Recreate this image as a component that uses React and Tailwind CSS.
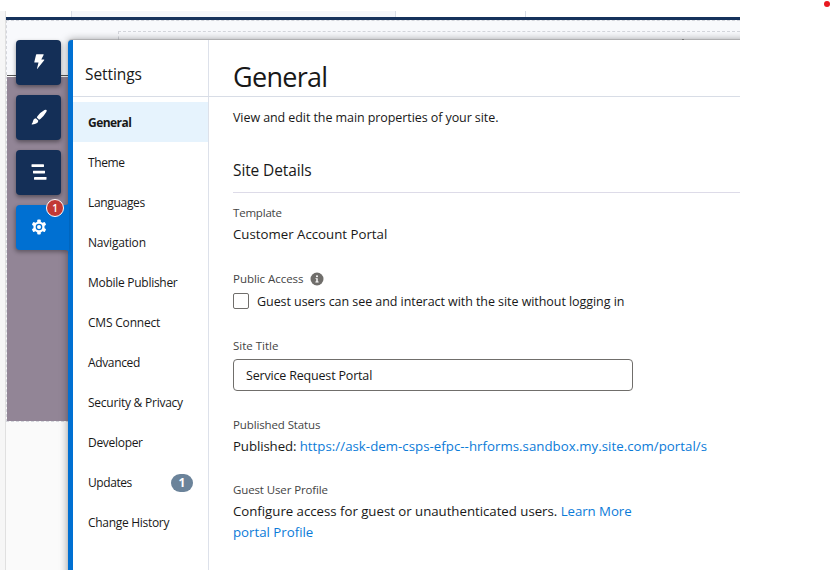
const NAV = [
  ["Theme", "tracking-[-0.4px]"],
  ["Languages", "tracking-[-0.32px]"],
  ["Navigation", "tracking-[-0.2px]"],
  ["Mobile Publisher", "tracking-[-0.28px]"],
  ["CMS Connect", "tracking-[-0.2px]"],
  ["Advanced", "tracking-[-0.35px]"],
  ["Security & Privacy", "tracking-[-0.24px]"],
  ["Developer", "tracking-[-0.3px]"],
  ["Updates", "tracking-[-0.42px]"],
  ["Change History", "tracking-[-0.3px]"],
];

function Bolt() {
  return (
    <svg width="45" height="45" viewBox="0 0 45 45" fill="#fff">
      <path d="M20.6 14.3h6.7q.6 0 .3.6l-2.3 4.6h2.6q.7.1.3.7l-6.8 8.6q-.5.4-.4-.2l1.5-6h-3.7q-.6 0-.5-.6l1.7-7.1q.1-.6.6-.6z" />
    </svg>
  );
}

function Brush() {
  return (
    <svg width="45" height="45" viewBox="0 0 45 45" fill="#fff">
      <path d="M30.5 14.9q.6.6-.2 2-2.6 4.300-5.900 7.100l-1.300.7-2.300-2.300.6-1.200q2.900-3.700 7.100-6.100 1.400-.8 2-.2z" />
      <path d="M19.900 23.300l2.300 2.200q.2 1.700-1.100 2.600-2.100 1.500-5.100 1.400-.7-.2-.2-.7 1.100-1 1.200-2.700.5-2.600 2.900-2.800z" />
    </svg>
  );
}

function Structure() {
  return (
    <svg width="45" height="45" viewBox="0 0 45 45" fill="#fff">
      <rect x="15.500" y="14.300" width="12.500" height="2.700" rx=".4" />
      <rect x="17" y="20.700" width="12" height="2.700" rx=".4" />
      <rect x="18" y="27" width="12.500" height="2.700" rx=".4" />
    </svg>
  );
}

function Gear() {
  return (
    <svg width="46" height="45" viewBox="0 0 46 45">
      <g fill="#fff">
        <circle cx="23" cy="22" r="5.600" />
        <rect x="21.200" y="14.600" width="3.600" height="14.800" rx="1" />
        <rect x="21.200" y="14.600" width="3.600" height="14.800" rx="1" transform="rotate(60 23 22)" />
        <rect x="21.200" y="14.600" width="3.600" height="14.800" rx="1" transform="rotate(120 23 22)" />
      </g>
      <circle cx="23" cy="22" r="3.300" fill="#0070d2" />
      <circle cx="23" cy="22" r="2" fill="#fff" />
    </svg>
  );
}

function Info() {
  return (
    <svg width="14" height="14" viewBox="0 0 14 14">
      <circle cx="7" cy="7" r="6.500" fill="#706e6b" />
      <circle cx="7" cy="4.300" r="1" fill="#fff" />
      <path d="M5.500 6.200h2.200v3.200h.9v1H5.400v-1h.9V7.100h-.8z" fill="#fff" />
    </svg>
  );
}

function ToolTile({ children }) {
  return (
    <div className="h-[45px] w-[45px] rounded-[4px] bg-[#142f57] shadow-[0_2px_4px_rgba(0,0,0,0.4)]">
      {children}
    </div>
  );
}

function Canvas() {
  return (
    <div className="flex h-full w-[740px] flex-col pt-[11px]">
      <div className="flex min-h-0 flex-1">
        <div className="w-[6px] border-r border-[#e0e0e0] bg-[#f6f6f6]" />
        <div className="flex flex-1 flex-col bg-[#fafafa]">
          <div className="flex h-[6px] bg-white">
            <div className="w-[66px] border-r border-[#d8dde6]" />
            <div className="w-[324px] border-r border-[#d8dde6] bg-[#f4f6fa]" />
            <div className="w-[130px] border-r border-[#d8dde6]" />
          </div>
          <div className="h-[3px] bg-[#16325c]" />
          <div className="h-[55px] border-l border-t border-dashed border-[#d4d6dc] bg-[#f8f9fc] pl-[111px] pt-[10px]">
            <div className="h-[30px] border-l border-t border-dashed border-[#d4d6dc]" />
          </div>
          <div className="ml-px h-px bg-[#555]" />
          <div className="h-[346px] border border-dashed border-[#d4d6dc] border-t-white bg-[#928596] bg-clip-padding" />
        </div>
      </div>
    </div>
  );
}

function Rail() {
  return (
    <div className="absolute left-[16px] top-[40px] z-10 flex flex-col gap-[10px]">
      <ToolTile><Bolt /></ToolTile>
      <ToolTile><Brush /></ToolTile>
      <ToolTile><Structure /></ToolTile>
      <div className="relative h-[45px] w-[53px] rounded-l-[4px] bg-[#0070d2] shadow-[-1px_2px_4px_rgba(0,0,0,0.35)]">
        <Gear />
        <svg className="absolute -top-[4px] right-0" width="4" height="4" viewBox="0 0 4 4">
          <path d="M4 0v4H0Q4 4 4 0z" fill="#0070d2" />
        </svg>
        <svg className="absolute -bottom-[4px] right-0" width="4" height="4" viewBox="0 0 4 4">
          <path d="M4 4V0H0Q4 0 4 4z" fill="#0070d2" />
        </svg>
        <span className="absolute left-[30px] top-[-6px] flex h-[18px] w-[18px] items-center justify-center rounded-full border border-white bg-[#c23934] text-[10px] font-semibold leading-none text-white">
          1
        </span>
      </div>
    </div>
  );
}

function Field({ label, labelClass, icon, className, children }) {
  return (
    <div className={className}>
      <div className="flex h-4 items-center gap-[6px] text-[11.500px] leading-4 text-[#444]">
        <span className={labelClass}>{label}</span>
        {icon}
      </div>
      {children}
    </div>
  );
}

export default function App() {
  return (
    <div className="relative h-[570px] w-[831px] overflow-hidden bg-white font-['Open_Sans','Noto_Sans',sans-serif] text-[#181818]">
      <Canvas />
      <Rail />
      <div className="absolute left-0 top-[20px] h-[550px] w-[740px] overflow-hidden">
        <div className="ml-[68px] mt-[20px] flex h-[560px] w-[690px] flex-col rounded-tl-[4px] border-l-[5px] border-[#0070d2] bg-white shadow-[0_0_8px_rgba(0,0,0,0.4),0_-1px_1px_rgba(0,0,0,0.15)]">
          <div className="flex h-[57px] border-b border-[#d8dde6] whitespace-nowrap">
            <div className="w-[136px] border-r border-[#dde1ea] pl-[12px] pt-[22px] text-[15.500px] leading-6 tracking-[-0.08px]">
              <span>Settings</span>
            </div>
            <h1 className="pl-[24px] pt-[17px] text-[27px] leading-10 tracking-[-0.7px]">
              <span>General</span>
            </h1>
          </div>
          <div className="flex flex-1">
            <nav className="w-[136px] border-r border-[#dde1ea] pt-[5px] text-[12px]">
              <div className="flex h-10 items-center bg-[#e6f3fd] pl-[15px] pt-[2px] font-bold tracking-[-0.55px]">
                <span>General</span>
              </div>
              {NAV.map(([name, track]) => (
                <div key={name} className="flex h-10 items-center justify-between pl-[15px] pr-[15px] pt-[2px] whitespace-nowrap">
                  <span className={track}>{name}</span>
                  {name === "Updates" && (
                    <span className="flex h-[18px] w-[22px] items-center justify-center rounded-full bg-[#6b839a] text-[12px] font-bold leading-none text-white">
                      1
                    </span>
                  )}
                </div>
              ))}
            </nav>
            <main className="flex-1 pl-[24px] text-[13.250px] leading-5 whitespace-nowrap">
              <p className="mt-[11px] text-[12.500px] tracking-[-0.08px]"><span>View and edit the main properties of your site.</span></p>
              <h2 className="mt-[32px] h-[33px] border-b border-[#dddbe8] text-[15.500px] leading-5 tracking-[-0.12px]">
                <span>Site Details</span>
              </h2>
              <Field label="Template" labelClass="tracking-[-0.2px]" className="mt-[12px]">
                <p className="mt-[3px]"><span>Customer Account Portal</span></p>
              </Field>
              <Field label="Public Access" labelClass="tracking-[-0.04px]" icon={<Info />} className="mt-[27px]">
                <label className="mt-[4px] flex items-center gap-[8px]">
                  <span className="h-4 w-4 rounded-[2px] border border-[#706e6b] bg-white" />
                  <span className="pt-px text-[12.500px] leading-[19px] tracking-[-0.06px]">Guest users can see and interact with the site without logging in</span>
                </label>
              </Field>
              <Field label="Site Title" className="mt-[27px]">
                <div className="mt-[5px] flex h-8 w-[400px] items-center rounded-[4px] border border-[#706e6b] pl-[12px] pt-[2px] text-[12.500px] tracking-[-0.18px]">
                  <span>Service Request Portal</span>
                </div>
              </Field>
              <Field label="Published Status" labelClass="tracking-[-0.12px]" className="mt-[26px]">
                <p className="mt-[3px]">
                  <span className="tracking-[-0.1px]">Published: </span>
                  <a className="tracking-[0.03px] text-[#0b7bd8]">https://ask-dem-csps-efpc--hrforms.sandbox.my.site.com/portal/s</a>
                </p>
              </Field>
              <Field label="Guest User Profile" labelClass="tracking-[-0.12px]" className="mt-[26px]">
                <div className="mt-[3px] leading-[21px]">
                  <p><span className="tracking-[-0.025px]">Configure access for guest or unauthenticated users. </span><a className="tracking-[-0.05px] text-[#0b7bd8]">Learn More</a></p>
                  <p><a className="text-[#0b7bd8]">portal Profile</a></p>
                </div>
              </Field>
            </main>
          </div>
        </div>
      </div>
      <span className="absolute left-[824px] top-[1px] h-[6px] w-[6px] rounded-full bg-[#e8191f]" />
      <span className="absolute left-[682px] top-[39px] h-px w-[2px] bg-[#777]" />
    </div>
  );
}
